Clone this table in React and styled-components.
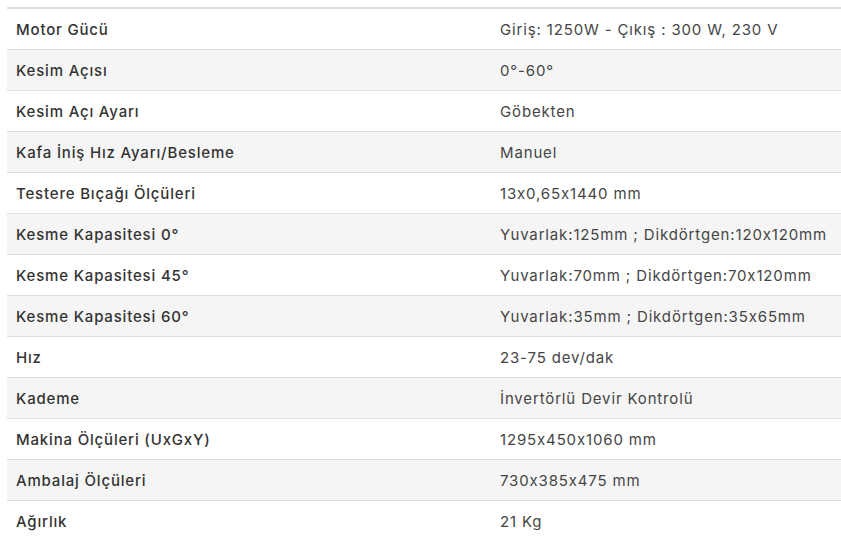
import React from 'react';
import styled, { createGlobalStyle } from 'styled-components';

const GlobalStyle = createGlobalStyle`
  html, body {
    margin: 0;
    padding: 0;
    background: #ffffff;
  }
  body {
    font-family: 'Inter', 'Open Sans', sans-serif;
  }
`;

const Page = styled.div`
  padding: 7px 0 0 7px;
`;

const SpecTable = styled.div`
  border-top: 2px solid #dedede;
`;

const Row = styled.div`
  display: grid;
  grid-template-columns: 484px 1fr;
  height: 40px;
  align-items: center;
  background: ${props => (props.$shaded ? '#f5f5f5' : '#ffffff')};
  border-bottom: 1px solid #dedede;

  &:last-child {
    border-bottom: none;
  }
`;

const Label = styled.div`
  padding-left: 9px;
  font-size: 15px;
  font-weight: 500;
  letter-spacing: 0.82px;
  color: #333333;
`;

const Value = styled.div`
  padding-left: 9px;
  font-size: 15px;
  font-weight: 400;
  letter-spacing: 0.85px;
  color: #454545;
  white-space: nowrap;
`;

const specs = [
  ['Motor Gücü', 'Giriş: 1250W - Çıkış : 300 W, 230 V'],
  ['Kesim Açısı', '0°-60°'],
  ['Kesim Açı Ayarı', 'Göbekten'],
  ['Kafa İniş Hız Ayarı/Besleme', 'Manuel'],
  ['Testere Bıçağı Ölçüleri', '13x0,65x1440 mm'],
  ['Kesme Kapasitesi 0°', 'Yuvarlak:125mm ; Dikdörtgen:120x120mm'],
  ['Kesme Kapasitesi 45°', 'Yuvarlak:70mm ; Dikdörtgen:70x120mm'],
  ['Kesme Kapasitesi 60°', 'Yuvarlak:35mm ; Dikdörtgen:35x65mm'],
  ['Hız', '23-75 dev/dak'],
  ['Kademe', 'İnvertörlü Devir Kontrolü'],
  ['Makina Ölçüleri (UxGxY)', '1295x450x1060 mm'],
  ['Ambalaj Ölçüleri', '730x385x475 mm'],
  ['Ağırlık', '21 Kg'],
];

export default function App() {
  return (
    <>
      <GlobalStyle />
      <Page>
        <SpecTable>
          {specs.map(([label, value], i) => (
            <Row key={label} $shaded={i % 2 === 1}>
              <Label>{label}</Label>
              <Value>{value}</Value>
            </Row>
          ))}
        </SpecTable>
      </Page>
    </>
  );
}
